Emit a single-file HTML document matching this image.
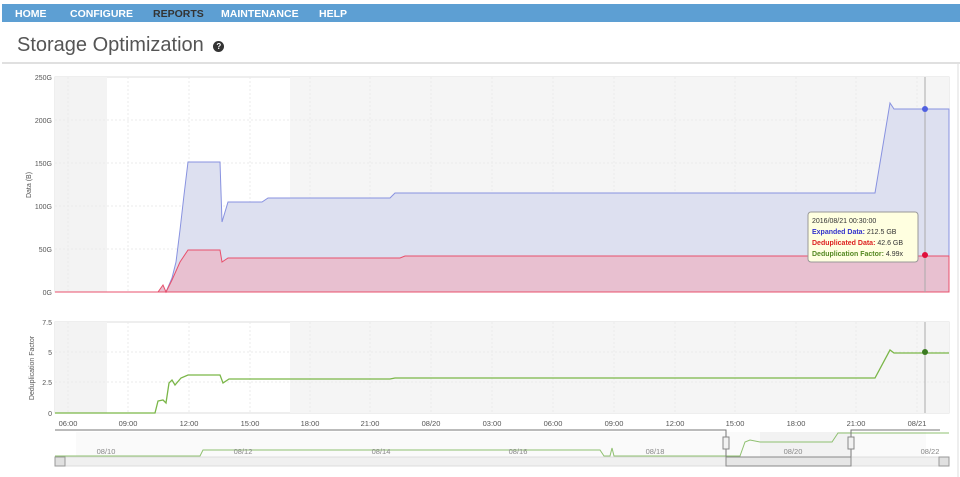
<!DOCTYPE html>
<html><head><style>
body{margin:0;width:960px;height:477px;overflow:hidden;background:#fff;font-family:"Liberation Sans",sans-serif;position:relative}
.nav{position:absolute;left:2px;top:4px;width:958px;height:18px;background:#5d9fd3}
.nav span{position:absolute;top:4px;font-size:10.5px;font-weight:bold;color:#fff}
h1{position:absolute;left:17px;top:34px;margin:0;font-weight:normal;font-size:20px;color:#555}
.hr{position:absolute;left:2px;top:62px;width:958px;height:2px;background:#e0e0e0}
svg text{font-family:"Liberation Sans",sans-serif}
</style></head><body>
<div class="nav">
<span style="left:13px">HOME</span><span style="left:68px">CONFIGURE</span><span style="left:151px;color:#333">REPORTS</span><span style="left:219px">MAINTENANCE</span><span style="left:317px">HELP</span>
</div>
<h1>Storage Optimization <span style="display:inline-block;width:11px;height:11px;border-radius:50%;background:#333;color:#fff;font-size:8px;text-align:center;line-height:11px;font-weight:bold;vertical-align:2px;margin-left:4px">?</span></h1>
<div class="hr"></div>
<svg width="960" height="477" style="position:absolute;left:0;top:0">
<line x1="958" y1="64" x2="958" y2="477" stroke="#ddd"/>
<rect x="55" y="77" width="894" height="215" fill="#fff" stroke="#ddd"/>
<rect x="55" y="77" width="52" height="215" fill="#f3f3f3"/>
<rect x="290" y="77" width="659" height="215" fill="#f5f5f5"/>
<rect x="55" y="322" width="894" height="91" fill="#fff" stroke="#ddd"/>
<rect x="55" y="322" width="52" height="91" fill="#f3f3f3"/>
<rect x="290" y="322" width="659" height="91" fill="#f5f5f5"/>
<g stroke="#ebebeb" stroke-dasharray="2,2">
<path d="M68 77V292M128 77V292M189 77V292M250 77V292M310 77V292M370 77V292M431 77V292M492 77V292M553 77V292M614 77V292M675 77V292M735 77V292M796 77V292M856 77V292M917 77V292"/>
<path d="M68 322V413M128 322V413M189 322V413M250 322V413M310 322V413M370 322V413M431 322V413M492 322V413M553 322V413M614 322V413M675 322V413M735 322V413M796 322V413M856 322V413M917 322V413"/>
<path d="M55 120H949M55 163H949M55 206H949M55 249H949M55 352H949M55 382H949"/>
</g>
<path d="M55 292H158L163 288L166 292L172 278L176 262L180 230L184 195L188 162H220L222 222L228 202H262L268 198H390L395 193H875L890 103L894 109H949V292Z" fill="#dde0f0" stroke="#8892e0" stroke-width="1"/>
<path d="M55 292H158L163 285L166 292L172 280L180 262L188 250H220L222 262L228 258H400L405 256H949V292Z" fill="#e8c0d0" stroke="#e8506c" stroke-width="1"/>
<line x1="925" y1="77" x2="925" y2="292" stroke="#aaa"/>
<circle cx="925" cy="109" r="3" fill="#5060e0"/>
<circle cx="925" cy="255" r="3" fill="#e0103c"/>
<path d="M55 413H155L158 401L163 400L166 403L169 383L172 380L175 385L181 378L188 375H220L223 383L229 379H390L395 378H875L890 350L894 353H949" fill="none" stroke="#7ab648" stroke-width="1.3"/>
<line x1="925" y1="322" x2="925" y2="413" stroke="#aaa"/>
<circle cx="925" cy="352" r="3" fill="#3a7a20"/>
<g font-size="7" fill="#555" text-anchor="end">
<text x="52" y="80">250G</text><text x="52" y="123">200G</text><text x="52" y="166">150G</text><text x="52" y="209">100G</text><text x="52" y="252">50G</text><text x="52" y="295">0G</text>
<text x="52" y="325">7.5</text><text x="52" y="355">5</text><text x="52" y="385">2.5</text><text x="52" y="416">0</text>
</g>
<text transform="translate(31 185) rotate(-90)" font-size="7" fill="#555" text-anchor="middle">Data (B)</text>
<text transform="translate(34 368) rotate(-90)" font-size="7" fill="#555" text-anchor="middle">Deduplication Factor</text>
<g font-size="7.5" fill="#555" text-anchor="middle">
<text x="68" y="426">06:00</text><text x="128" y="426">09:00</text><text x="189" y="426">12:00</text><text x="250" y="426">15:00</text><text x="310" y="426">18:00</text><text x="370" y="426">21:00</text><text x="431" y="426">08/20</text><text x="492" y="426">03:00</text><text x="553" y="426">06:00</text><text x="614" y="426">09:00</text><text x="675" y="426">12:00</text><text x="735" y="426">15:00</text><text x="796" y="426">18:00</text><text x="856" y="426">21:00</text><text x="917" y="426">08/21</text>
</g>
<rect x="808" y="212" width="110" height="50" rx="3" fill="#ffffe0" stroke="#999"/>
<g font-size="7">
<text x="812" y="223" fill="#333">2016/08/21 00:30:00</text>
<text x="812" y="234" fill="#3333cc" font-weight="bold">Expanded Data: <tspan fill="#333" font-weight="normal">212.5 GB</tspan></text>
<text x="812" y="245" fill="#dd2222" font-weight="bold">Deduplicated Data: <tspan fill="#333" font-weight="normal">42.6 GB</tspan></text>
<text x="812" y="256" fill="#558822" font-weight="bold">Deduplication Factor: <tspan fill="#333" font-weight="normal">4.99x</tspan></text>
</g>
<rect x="76" y="432" width="850" height="25" fill="#fafafa"/>
<rect x="760" y="432" width="90" height="25" fill="#f2f2f2"/>
<path d="M55 456H200L203 450H600L604 456H610L612 448L614 456H726L740 456L745 442L750 440L760 442H832L838 433H949" fill="none" stroke="#8fc070" stroke-width="1"/>
<g font-size="7.5" fill="#888" text-anchor="middle">
<text x="106" y="454">08/10</text><text x="243" y="454">08/12</text><text x="381" y="454">08/14</text><text x="518" y="454">08/16</text><text x="655" y="454">08/18</text><text x="793" y="454">08/20</text><text x="930" y="454">08/22</text>
</g>
<path d="M55 430H726V466H851V430H940" fill="none" stroke="#777" stroke-width="1"/>
<rect x="55" y="457" width="894" height="9" fill="#f0f0f0" stroke="#ddd"/>
<rect x="726" y="457" width="125" height="9" fill="#e6e6e6" stroke="#888"/>
<rect x="55" y="457" width="10" height="9" fill="#e0e0e0" stroke="#999"/>
<rect x="939" y="457" width="10" height="9" fill="#e0e0e0" stroke="#999"/>
<rect x="723" y="437" width="6" height="12" fill="#f2f2f2" stroke="#888"/>
<rect x="848" y="437" width="6" height="12" fill="#f2f2f2" stroke="#888"/>
</svg>
</body></html>
